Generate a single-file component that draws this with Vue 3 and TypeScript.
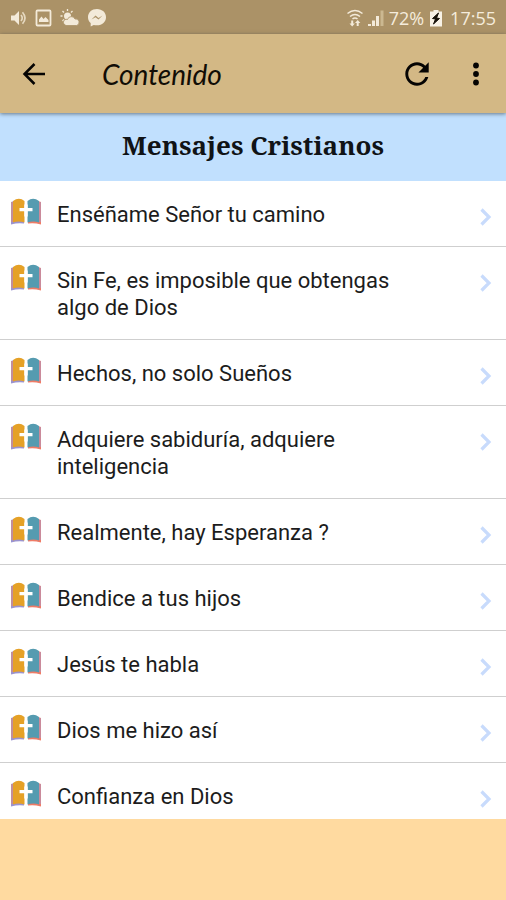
<script setup lang="ts">
interface Message {
  id: number
  title: string
}

const messages: Message[] = [
  'Enséñame Señor tu camino',
  'Sin Fe, es imposible que obtengas algo de Dios',
  'Hechos, no solo Sueños',
  'Adquiere sabiduría, adquiere inteligencia',
  'Realmente, hay Esperanza ?',
  'Bendice a tus hijos',
  'Jesús te habla',
  'Dios me hizo así',
  'Confianza en Dios',
].map((title, id) => ({ id, title }))
</script>

<template>
  <div class="screen">
    <div class="status">
      <div class="status-left">
        <svg width="18" height="18" viewBox="0 0 18 18">
          <path d="M1 6.500h3.500L9 2v14l-4.500-4.500H1z" fill="#f3ead9" />
          <path d="M11 6q2.500 3 0 6M12.500 3.200q5 5.800 0 11.600" fill="none" stroke="#e6d9c0" stroke-width="1.700" />
        </svg>
        <svg width="18" height="18" viewBox="0 0 18 18">
          <rect x="1.500" y="1.500" width="14" height="15" rx="1" fill="none" stroke="#f3ead9" stroke-width="1.800" />
          <path d="M4 13V10.500l2.500-3 2 2.500 2-2 3 3V13z" fill="#f3ead9" />
        </svg>
        <svg width="20" height="18" viewBox="0 0 20 18">
          <circle cx="7.500" cy="7" r="3.500" fill="#f3ead9" />
          <path d="M7.500 0v2M2.500 2l1.500 1.500M0.500 7h2M12.500 2L11 3.500M2.500 12L4 10.500" stroke="#f3ead9" stroke-width="1.300" />
          <path d="M6 16.500a3.200 3.200 0 0 1 0-6.300q1 .2 1.500.3a4 4 0 0 1 7.500-.5a3.300 3.300 0 0 1 1.500 6.500z" fill="#f3ead9" stroke="#ab9267" stroke-width=".8" />
        </svg>
        <svg width="20" height="20" viewBox="0 0 20 20">
          <path d="M10 1C4.800 1 1 4.500 1 9.200c0 2.400 1 4.400 2.700 5.800v3.500l3-1.600c1 .3 2.100.4 3.300.4 5.200 0 9-3.500 9-8.100S15.200 1 10 1z" fill="#f3ead9" />
          <path d="M4.500 11.500l4-4 3 2.500 4-2.500-4 4-3-2.300z" fill="#ab9267" />
        </svg>
      </div>
      <div class="status-right">
        <svg width="18" height="18" viewBox="0 0 18 18">
          <path d="M1.500 4.500q7.500-6 15 0M4 7.500q5-4 10 0M6.500 10q2.500-2 5 0" fill="none" stroke="#f3ead9" stroke-width="1.600" />
          <path d="M6.200 17.500l-2.700-3h1.700v-3h2v3h1.700zM11.700 11l-2.700 3h1.700v3h2v-3h1.700z" fill="#f3ead9" />
        </svg>
        <svg class="signal" width="18" height="18" viewBox="0 0 18 18">
          <path d="M1 15h3v2H1zM5 11.500h3V17H5zM9 7h3v10H9z" fill="#f3ead9" />
          <path d="M13.500 1.500h3V17h-3z" fill="#cbb891" />
        </svg>
        <span class="percent">72%</span>
        <svg class="battery" width="12" height="18" viewBox="0 0 12 18">
          <path d="M3.500 1h5v1.500H12V17.500H0V2.500h3.500z" fill="#f8f2e6" />
          <path d="M8.500 4L2.500 9.500l3 .5L3.500 15l6-5.500-3-.5z" fill="#17120a" stroke="#17120a" />
        </svg>
        <time>17:55</time>
      </div>
    </div>

    <header class="toolbar">
      <button class="tool back" type="button" aria-label="Volver">
        <svg width="24" height="24" viewBox="0 0 24 24" fill="none" stroke="#050403" stroke-width="2.500">
          <path d="M23 12H2.500M12.500 2L2.500 12l10 10" />
        </svg>
      </button>
      <h1>Contenido</h1>
      <button class="tool reload" type="button" aria-label="Recargar">
        <svg width="24" height="24" viewBox="3.800 3.800 16.400 16.400">
          <path d="M17.650 6.350C16.200 4.900 14.210 4 12 4c-4.420 0-7.990 3.580-7.990 8s3.570 8 7.990 8c3.730 0 6.840-2.550 7.730-6h-2.080c-.820 2.330-3.040 4-5.650 4-3.310 0-6-2.690-6-6s2.690-6 6-6c1.660 0 3.140.690 4.220 1.780L13 11h7V4l-2.350 2.350z" fill="#050403" />
        </svg>
      </button>
      <button class="tool" type="button" aria-label="Más opciones">
        <svg width="8" height="24" viewBox="0 0 8 24" fill="#050403">
          <circle cx="4" cy="3.500" r="2.900" />
          <circle cx="4" cy="12" r="2.900" />
          <circle cx="4" cy="20.500" r="2.900" />
        </svg>
      </button>
    </header>

    <main>
      <h2>Mensajes Cristianos</h2>
      <ul>
        <li v-for="message in messages" :key="message.id">
          <a :href="`#mensaje-${message.id}`">
            <svg class="book" width="32" height="28" viewBox="0 0 32 28">
              <path d="M1 4l3-1v20l10 0v2.500q-6-1-13 1z" fill="#9a93d0" />
              <path d="M31 4l-3-1v20l-10 0v2.500q6-1 13 1z" fill="#ef7b66" />
              <path d="M2 4v20" stroke="#e88a6a" />
              <path d="M30 4v20" stroke="#a59ad0" />
              <path d="M3 3Q9-1.500 14.500 3v21.500q-6-2-11.500 0z" fill="#e5a127" />
              <path d="M29 3Q23-1.500 17.500 3v21.500q6-2 11.500 0z" fill="#559bb0" />
              <path d="M9.500 10h13v3.200H9.500zM14.300 6.500h3.400v12h-3.400z" fill="#fff" />
            </svg>
            <span class="label">{{ message.title }}</span>
            <svg class="chevron" width="12" height="18" viewBox="0 0 12 18" fill="none" stroke="#c8dbfc" stroke-width="3.200">
              <path d="M1.500 1.500L9 9l-7.500 7.500" />
            </svg>
          </a>
        </li>
      </ul>
    </main>
    <footer class="banner"></footer>
  </div>
</template>

<style>
body {
  margin: 0;
  background: #ffdaa0;
}
</style>

<style scoped>
.screen {
  display: flex;
  flex-direction: column;
  height: 100vh;
  font-family: Roboto, "Liberation Sans", sans-serif;
}

.status {
  display: flex;
  flex: none;
  justify-content: space-between;
  align-items: center;
  box-sizing: border-box;
  height: 34px;
  padding: 2px 10px 0;
  background: #ab9267;
  color: #f5ecdc;
}

.status-left,
.status-right {
  display: flex;
  align-items: center;
}

.status-left {
  gap: 7px;
}

.status-right {
  font-family: "Open Sans", sans-serif;
  font-size: 18px;
  font-weight: 500;
  line-height: 24px;
}

.signal {
  margin-left: 3px;
}

.percent {
  margin-left: 4px;
}

.battery {
  margin: 0 8px 0 6px;
}

.toolbar {
  position: relative;
  display: flex;
  flex: none;
  align-items: center;
  box-sizing: border-box;
  height: 79px;
  padding: 0 18px 0 14px;
  background: #d3b885;
  box-shadow: 0 1px 4px rgba(40, 50, 60, 0.6);
}

.tool {
  display: flex;
  padding: 8px;
  border: 0;
  background: none;
}

.toolbar h1 {
  flex: 1;
  margin: 0 0 0 48px;
  color: #110d06;
  font-family: Lato, sans-serif;
  font-size: 28px;
  font-style: italic;
  font-weight: 400;
  line-height: 32px;
}

.reload {
  margin-right: 27px;
}

main {
  flex: 1;
  min-height: 0;
  overflow: hidden;
  background: #fff;
}

.banner {
  flex: none;
  height: 81px;
  background: #ffdaa0;
}

h2 {
  margin: 0;
  padding: 14px 0 18px;
  background: #c1e0fe;
  color: #101316;
  font-family: "Noto Serif", "Liberation Serif", serif;
  font-size: 26px;
  font-weight: 700;
  line-height: 36px;
  text-align: center;
}

ul {
  margin: 0;
  padding: 0;
  list-style: none;
}

li {
  border-bottom: 1px solid #cfcfcf;
}

a {
  display: flex;
  align-items: flex-start;
  padding: 20px 14px 18px 10px;
  color: #1c1c1c;
  font-size: 22px;
  line-height: 27px;
  text-decoration: none;
}

.book {
  flex: none;
  margin-top: -3px;
}

.label {
  flex: 1;
  padding: 0 60px 0 15px;
}

.chevron {
  flex: none;
  margin-top: 7px;
}
</style>
